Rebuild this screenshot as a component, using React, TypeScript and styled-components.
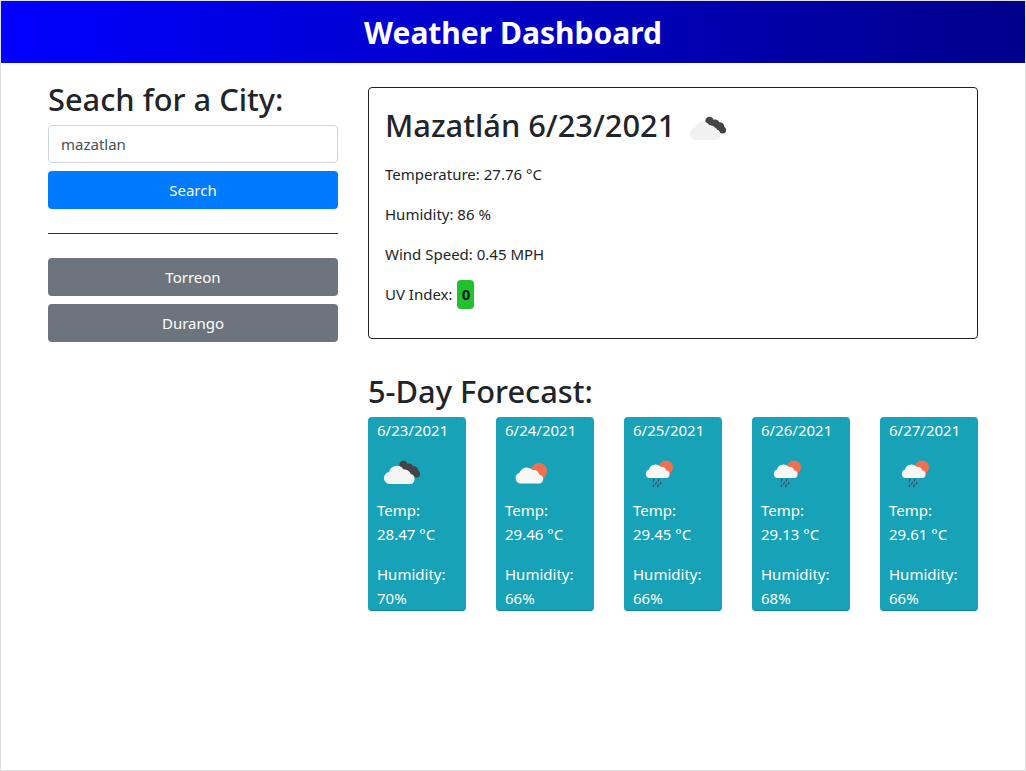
import React from "react";
import styled, { createGlobalStyle } from "styled-components";

const GlobalStyle = createGlobalStyle`
  * { box-sizing: border-box; }
  body {
    margin: 0;
    background: #fff;
    color: #212529;
    font-family: "Noto Sans", "Open Sans", sans-serif;
    font-size: 15px;
    line-height: 24px;
  }
`;

type IconKind = "clouds" | "sun" | "rain";

const forecast: { date: string; icon: IconKind; temp: string; humidity: string }[] = [
  { date: "6/23/2021", icon: "clouds", temp: "28.47", humidity: "70" },
  { date: "6/24/2021", icon: "sun", temp: "29.46", humidity: "66" },
  { date: "6/25/2021", icon: "rain", temp: "29.45", humidity: "66" },
  { date: "6/26/2021", icon: "rain", temp: "29.13", humidity: "68" },
  { date: "6/27/2021", icon: "rain", temp: "29.61", humidity: "66" },
];

const cloudPath =
  "M13.5 36H32.5a5 5 0 0 0 1-9.9 6 6 0 0 0-7-4.6 8 8 0 0 0-14.5 2.6A6 6 0 0 0 13.5 36z";

function WeatherIcon({ kind, fill = "#f5f5f5" }: { kind: IconKind; fill?: string }) {
  if (kind === "clouds") {
    return (
      <IconSvg viewBox="0 0 50 50">
        <circle cx="26.5" cy="17" r="4.2" fill="#444" />
        <circle cx="32" cy="20" r="4.6" fill="#444" />
        <circle cx="37" cy="22.5" r="4.2" fill="#444" />
        <circle cx="39.5" cy="26" r="3.6" fill="#444" />
        <path d={cloudPath} fill={fill} />
      </IconSvg>
    );
  }
  if (kind === "sun") {
    return (
      <IconSvg viewBox="0 0 50 50">
        <circle cx="34" cy="23" r="8" fill="#f0704f" />
        <path d="M15 35.5H33.5a4.5 4.5 0 0 0 .6-9 6 6 0 0 0-6.5-4.4 8 8 0 0 0-13.4 3A5.4 5.4 0 0 0 15 35.5z" fill="#f8f8f8" />
      </IconSvg>
    );
  }
  return (
    <IconSvg viewBox="0 0 50 50">
      <circle cx="33" cy="19.5" r="7" fill="#f0704f" />
      <path d="M16 30H32.5a3.8 3.8 0 0 0 .6-7.6 5 5 0 0 0-5.6-3.6 6.8 6.8 0 0 0-11.5 2.6A4.5 4.5 0 0 0 16 30z" fill="#f8f8f8" />
      <path d="M21 31l-1 2.4M26 31l-1 2.4M23.5 34l-1 2.4M28 34l-1 2.4M21 36.5l-1 2.4M25.5 36.5l-1 2.4" stroke="#3d4a55" strokeWidth="1.3" />
    </IconSvg>
  );
}

function App() {
  return (
    <Page>
      <GlobalStyle />
      <Header>Weather Dashboard</Header>
      <Container>
        <Sidebar>
          <Heading>Seach for a City:</Heading>
          <CityInput defaultValue="mazatlan" />
          <SearchButton>Search</SearchButton>
          <Divider />
          <HistoryList>
            <HistoryButton>Torreon</HistoryButton>
            <HistoryButton>Durango</HistoryButton>
          </HistoryList>
        </Sidebar>
        <Main>
          <CurrentCard>
            <CurrentTitle>
              <span>Mazatlán 6/23/2021</span>
              <WeatherIcon kind="clouds" fill="#f1f1f1" />
            </CurrentTitle>
            <Stat>Temperature: 27.76 °C</Stat>
            <Stat>Humidity: 86 %</Stat>
            <Stat>Wind Speed: 0.45 MPH</Stat>
            <Stat>
              UV Index: <UvBadge>0</UvBadge>
            </Stat>
          </CurrentCard>
          <ForecastHeading>5-Day Forecast:</ForecastHeading>
          <ForecastRow>
            {forecast.map((day) => (
              <DayCard key={day.date}>
                <div>{day.date}</div>
                <WeatherIcon kind={day.icon} />
                <DayText>
                  Temp:
                  <br />
                  {day.temp} °C
                </DayText>
                <DayText>
                  Humidity:
                  <br />
                  {day.humidity}%
                </DayText>
              </DayCard>
            ))}
          </ForecastRow>
        </Main>
      </Container>
    </Page>
  );
}

const IconSvg = styled.svg`
  display: block;
  width: 50px;
  height: 50px;
  flex: none;
`;

const Page = styled.div`
  min-height: 771px;
  border: 1px solid #dedede;
`;

const Header = styled.header`
  height: 62px;
  padding-top: 2px;
  display: flex;
  align-items: center;
  justify-content: center;
  background: linear-gradient(to right, #0000ff, #00008b);
  color: #fff;
  font-size: 30px;
  font-weight: 700;
`;

const Container = styled.div`
  width: 930px;
  margin: 0 auto;
  padding-top: 24px;
  display: flex;
  gap: 30px;
`;

const Sidebar = styled.aside`
  width: 290px;
  flex: none;
  display: flex;
  flex-direction: column;
`;

const Heading = styled.h2`
  margin: -7px 0 7px;
  font-size: 30.8px;
  font-weight: 500;
  line-height: 38px;
`;

const CityInput = styled.input`
  height: 38px;
  padding: 6px 12px;
  border: 1px solid #ced4da;
  border-radius: 4px;
  color: #495057;
  font: inherit;
  outline: none;
`;

const Button = styled.button`
  height: 38px;
  width: 100%;
  border: none;
  border-radius: 4px;
  color: #fff;
  font: inherit;
`;

const SearchButton = styled(Button)`
  margin-top: 8px;
  background: #007bff;
`;

const Divider = styled.hr`
  width: 100%;
  margin: 24px 0;
  border: none;
  border-top: 1px solid #333;
`;

const HistoryList = styled.div`
  display: flex;
  flex-direction: column;
  gap: 8px;
`;

const HistoryButton = styled(Button)`
  background: #6c757d;
`;

const Main = styled.main`
  width: 610px;
  flex: none;
`;

const CurrentCard = styled.section`
  height: 252px;
  padding: 12px 16px;
  border: 1px solid #222;
  border-radius: 4px;
`;

const CurrentTitle = styled.h2`
  margin: 0 0 12px;
  display: flex;
  align-items: center;
  gap: 8px;
  height: 50px;
  font-size: 30.8px;
  font-weight: 500;
  line-height: 38px;

  ${IconSvg} {
    margin-top: 8px;
  }
`;

const Stat = styled.p`
  margin: 0 0 16px;
  height: 24px;
  display: flex;
  align-items: center;
  gap: 1px;
  white-space: pre;
`;

const UvBadge = styled.span`
  display: inline-block;
  height: 29px;
  width: 17px;
  border-radius: 4px;
  background: #22c02c;
  color: #123;
  font-weight: 700;
  line-height: 29px;
  text-align: center;
`;

const ForecastHeading = styled.h2`
  margin: 33px 0 7px;
  font-size: 30.8px;
  font-weight: 500;
  line-height: 38px;
`;

const ForecastRow = styled.div`
  display: flex;
  justify-content: space-between;
`;

const DayCard = styled.article`
  width: 98px;
  height: 194px;
  padding: 1px 0 0 9px;
  border-radius: 4px;
  border-bottom: 1px solid #128596;
  background: #17a2b8;
  color: #fff;
  overflow: hidden;
  white-space: nowrap;

  ${IconSvg} {
    margin-top: 6px;
  }
`;

const DayText = styled.p`
  margin: 0 0 16px;
`;

export default App;
